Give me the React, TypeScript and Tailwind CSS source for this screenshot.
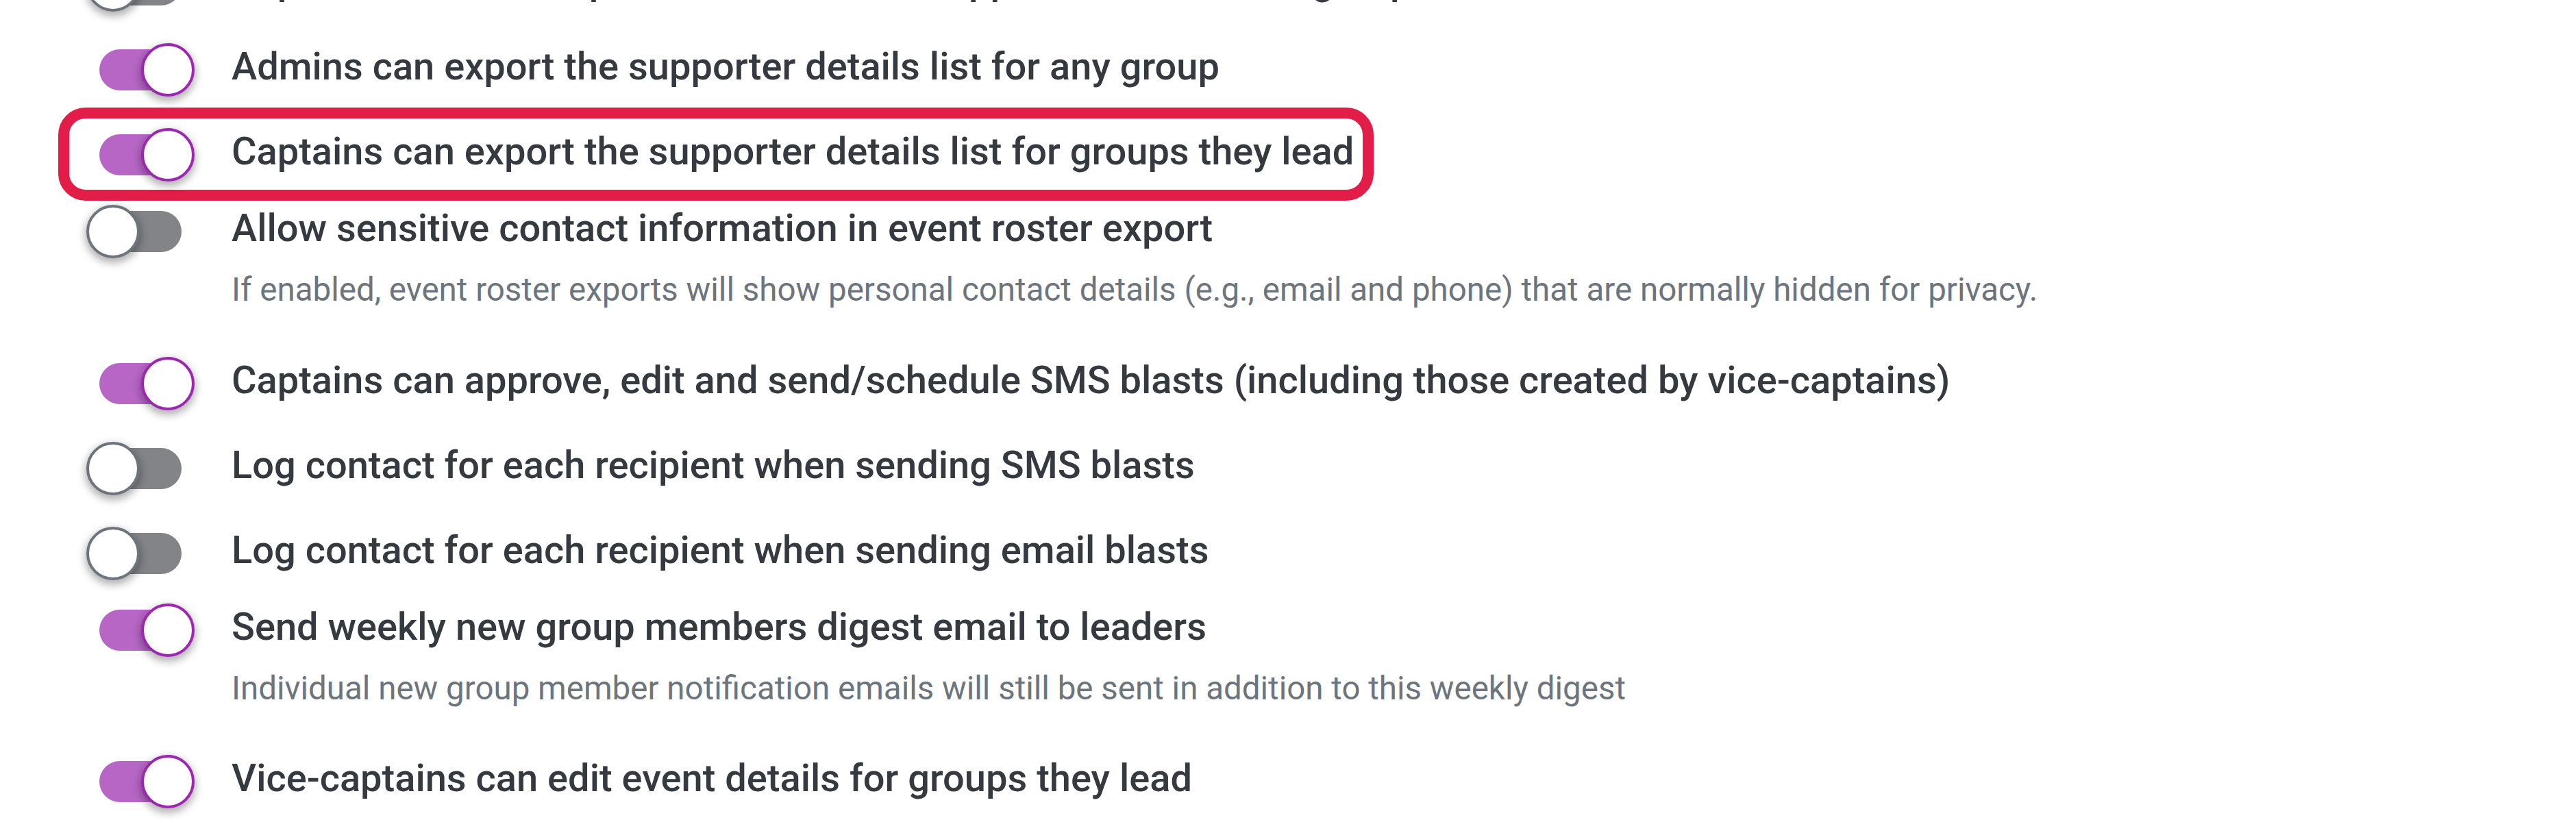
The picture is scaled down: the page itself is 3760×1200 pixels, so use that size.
import React from 'react';

type Setting = {
  label: string;
  on: boolean;
  help?: string;
  highlight?: boolean;
};

const settings: Setting[] = [
  { label: 'Captains and vice-captains can view the supporter list for their group', on: false },
  { label: 'Admins can export the supporter details list for any group', on: true },
  { label: 'Captains can export the supporter details list for groups they lead', on: true, highlight: true },
  {
    label: 'Allow sensitive contact information in event roster export',
    on: false,
    help: 'If enabled, event roster exports will show personal contact details (e.g., email and phone) that are normally hidden for privacy.',
  },
  { label: 'Captains can approve, edit and send/schedule SMS blasts (including those created by vice-captains)', on: true },
  { label: 'Log contact for each recipient when sending SMS blasts', on: false },
  { label: 'Log contact for each recipient when sending email blasts', on: false },
  {
    label: 'Send weekly new group members digest email to leaders',
    on: true,
    help: 'Individual new group member notification emails will still be sent in addition to this weekly digest',
  },
  { label: 'Vice-captains can edit event details for groups they lead', on: true },
];

// switch: track + thumb, thumb overhangs the track on both sides
function Toggle({ on }: { on: boolean }) {
  return (
    <div className="relative h-[84px] w-[158px] shrink-0">
      <div
        className={`absolute left-[19px] top-[17px] h-[60px] w-[120px] rounded-full ${
          on ? 'bg-[#b766c6]' : 'bg-[#828488]'
        }`}
      />
      <div
        className={`absolute top-[8px] h-[78px] w-[78px] rounded-full border-[4px] bg-white shadow-[0_5px_12px_2px_rgba(0,0,0,0.3)] ${
          on ? 'left-[80px] border-[#9c27b0]' : 'left-0 border-[#6c757d]'
        }`}
      />
    </div>
  );
}

function rowSpacing(item: Setting, prev?: Setting) {
  if (!prev) return '';
  if (item.help) return 'mt-[28px]';
  if (prev.help) return 'mt-[52px]';
  return 'mt-[40px]';
}

export default function App() {
  return (
    <div className="h-[1200px] w-full overflow-hidden bg-white [font-family:Roboto,sans-serif]">
      <div className="-mt-[69px] flex flex-col pl-[126px]">
        {settings.map((item, i) => (
          <div key={item.label} className={`relative flex items-start ${rowSpacing(item, settings[i - 1])}`}>
            {item.highlight && (
              <div className="pointer-events-none absolute left-[-41px] top-[-22px] h-[136px] w-[1920px] rounded-[40px] border-[16px] border-[#e21d48]" />
            )}
            <Toggle on={item.on} />
            <div className="ml-[54px] flex flex-col">
              <span className="whitespace-nowrap text-[56px] font-medium leading-[84px] text-[#343a40]">
                {item.label}
              </span>
              {item.help && (
                <span className="mt-[12px] whitespace-nowrap text-[47.5px] leading-[73.5px] text-[#6c757d]">
                  {item.help}
                </span>
              )}
            </div>
          </div>
        ))}
      </div>
    </div>
  );
}
